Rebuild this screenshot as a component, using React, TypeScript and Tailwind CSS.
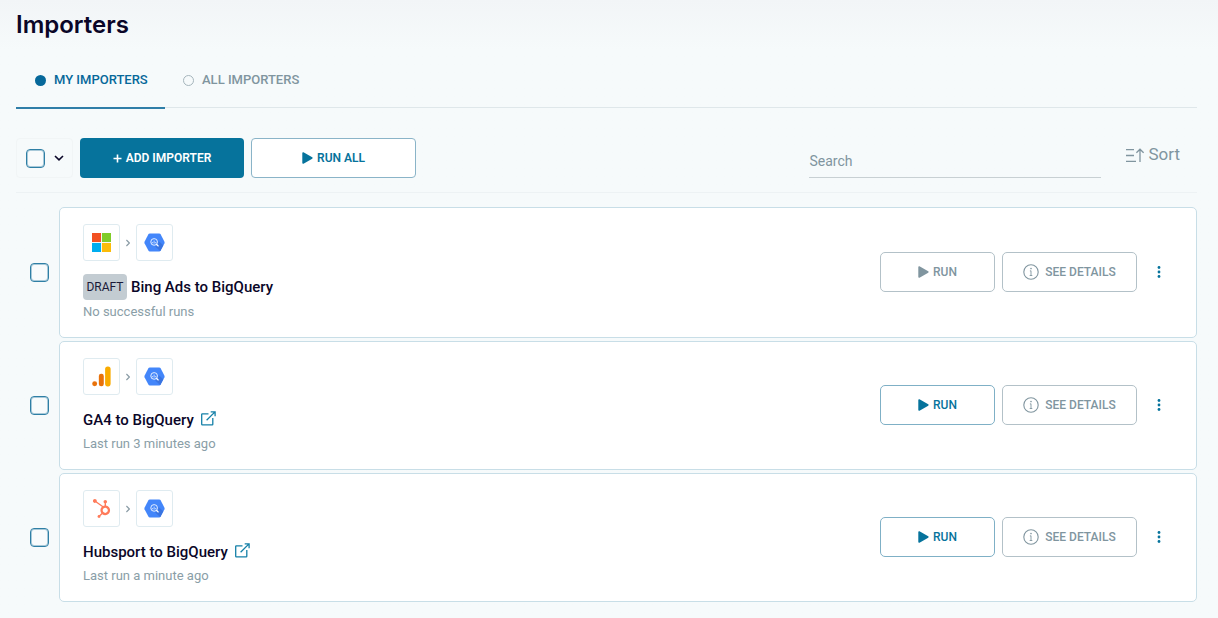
import type { ReactNode } from 'react';
import { FaHubspot } from 'react-icons/fa';

type Importer = {
  id: string;
  source: 'microsoft' | 'analytics' | 'hubspot';
  title: string;
  status: string;
  draft?: boolean;
};

const importers: Importer[] = [
  { id: 'bing', source: 'microsoft', title: 'Bing Ads to BigQuery', status: 'No successful runs', draft: true },
  { id: 'ga4', source: 'analytics', title: 'GA4 to BigQuery', status: 'Last run 3 minutes ago' },
  { id: 'hubspot', source: 'hubspot', title: 'Hubsport to BigQuery', status: 'Last run a minute ago' },
];

function MicrosoftLogo() {
  return (
    <svg width="19" height="19" viewBox="0 0 21 21" aria-hidden="true">
      <path fill="#f25022" d="M0 0h10v10H0z" />
      <path fill="#80cc28" d="M11 0h10v10H11z" />
      <path fill="#00adef" d="M0 11h10v10H0z" />
      <path fill="#fbbc09" d="M11 11h10v10H11z" />
    </svg>
  );
}

function AnalyticsLogo() {
  return (
    <svg width="19" height="21" viewBox="0 0 20 22" aria-hidden="true">
      <circle cx="2.8" cy="18.7" r="2.6" fill="#e8710a" />
      <rect x="7.2" y="8" width="5.2" height="13.3" rx="2.4" fill="#e8710a" />
      <rect x="13.8" y="0.4" width="5.8" height="21" rx="2.7" fill="#f9ab00" />
    </svg>
  );
}

function BigQueryLogo() {
  return (
    <svg width="21" height="19" viewBox="0 0 22 20" aria-hidden="true">
      <path fill="#4386fa" d="M6 .4h10c.6 0 1 .2 1.3.7l4.200 8.100c.2.5.2 1 0 1.500l-4.200 8.100c-.3.5-.7.8-1.300.8H6c-.6 0-1-.3-1.300-.8L.5 10.700c-.2-.5-.2-1 0-1.500L4.700 1.100C5 .6 5.400.4 6 .4z" />
      <path fill="#3a74e0" d="M14.500 13.800l-3 .2 5.400 5c.2-.1.3-.2.4-.4l3-5.600-5-4.600z" />
      <circle cx="10.6" cy="9.4" r="3.5" fill="#4386fa" stroke="#fff" strokeWidth="0.9" />
      <path d="M9 9.500v1.300M10.600 8v3.200M12.200 9.500v1.300" stroke="#fff" strokeWidth="0.7" />
      <path d="M13.300 12.100l1.600 1.600" stroke="#fff" strokeWidth="1.2" strokeLinecap="round" />
    </svg>
  );
}

function PlayIcon() {
  return (
    <svg width="11" height="12" viewBox="0 0 11 12" fill="currentColor" aria-hidden="true">
      <path d="M.3 1C.3.300.9 0 1.500.300l8.700 5c.6.300.6 1.100 0 1.400l-8.700 5c-.6.300-1.200 0-1.200-.7z" />
    </svg>
  );
}

function InfoIcon() {
  return (
    <svg width="16" height="16" viewBox="0 0 16 16" fill="none" stroke="currentColor" aria-hidden="true">
      <circle cx="8" cy="8" r="7.2" strokeWidth="1.1" />
      <path d="M8 6.700v5M6.900 6.900H8M6.700 11.500h2.600" strokeWidth="0.9" />
      <circle cx="8" cy="4.600" r="0.8" fill="currentColor" stroke="none" />
    </svg>
  );
}

function ExternalIcon() {
  return (
    <svg width="15" height="15" viewBox="0 0 15 15" fill="none" stroke="currentColor" strokeWidth="1.3" aria-hidden="true">
      <path d="M7.500 2.800H1.300c-.4 0-.6.2-.6.6v9.900c0 .4.2.6.6.6h9.900c.4 0 .6-.2.6-.6V7" />
      <path d="M5.600 9.200L14 .9M9.700.8h4.400v4.400" />
    </svg>
  );
}

function SortIcon() {
  return (
    <svg width="19" height="15" viewBox="0 0 19 15" fill="none" stroke="currentColor" strokeWidth="1.3" aria-hidden="true">
      <path d="M1 1.700h8M1 7.500h8M1 13.300h10M15 14V1.200M11.400 4.800L15 1.200l3.600 3.600" />
    </svg>
  );
}

function Tile({ children }: { children: ReactNode }) {
  return (
    <div className="flex h-[37px] w-[37px] items-center justify-center rounded-[3px] border border-[#dfebf0] bg-white">
      {children}
    </div>
  );
}

function Checkbox({ label }: { label: string }) {
  return (
    <input
      type="checkbox"
      aria-label={label}
      className="h-[19px] w-[19px] shrink-0 appearance-none rounded-[4px] border border-[#2f7fa5] bg-[#f8fbfc] ring-1 ring-[#2f7fa5]/40 ring-inset checked:bg-[#06739c]"
    />
  );
}

function ImporterRow({ importer }: { importer: Importer }) {
  return (
    <li className="flex items-center gap-2.5 pl-3.5">
      <Checkbox label={`Select ${importer.title}`} />
      <article className="flex min-w-0 grow items-center justify-between rounded-[5px] border border-[#c8dee7] bg-white pt-4 pr-[25px] pb-[13px] pl-[23px]">
        <div>
          <div className="flex items-center">
            <Tile>
              {importer.source === 'microsoft' && <MicrosoftLogo />}
              {importer.source === 'analytics' && <AnalyticsLogo />}
              {importer.source === 'hubspot' && <FaHubspot size={19} color="#ff7a59" />}
            </Tile>
            <svg className="mx-1.5" width="4" height="8" viewBox="0 0 4 8" fill="none" stroke="#8a9ba5" strokeWidth="1.2" aria-hidden="true">
              <path d="M.4 1L3.400 4 .4 7" />
            </svg>
            <Tile>
              <BigQueryLogo />
            </Tile>
          </div>
          <div className="mt-[13px] flex items-center">
            {importer.draft && (
              <span className="mr-1 flex h-[26px] w-11 items-center justify-center rounded-[4px] bg-[#c3ccd2] text-xs text-[#1a1a38]">
                DRAFT
              </span>
            )}
            <h2 className="text-[15px] leading-6 font-medium text-[#0a0628]">{importer.title}</h2>
            {!importer.draft && (
              <a href="#" aria-label={`Open ${importer.title}`} className="mb-1 ml-[7px] text-[#1480a8]">
                <ExternalIcon />
              </a>
            )}
          </div>
          <p className="text-[13px] leading-6 text-[#8a9ea7]">{importer.status}</p>
        </div>
        <div className="flex items-center pb-1">
          <button
            disabled={importer.draft}
            className="flex h-10 w-[115px] items-center justify-center gap-1 rounded-[5px] border border-[#7fb0c6] bg-white text-xs font-medium text-[#06739c] disabled:border-[#b3c1c8] disabled:text-[#80959f]"
          >
            <PlayIcon />
            RUN
          </button>
          <button className="ml-[7px] flex h-10 w-[135px] items-center justify-center gap-1.5 rounded-[5px] border border-[#b3c1c8] bg-white text-xs font-medium text-[#80959f]">
            <InfoIcon />
            SEE DETAILS
          </button>
          <button aria-label="More actions" className="ml-2.5 flex h-10 w-6 items-center justify-center text-[#06739c]">
            <svg width="4" height="12" viewBox="0 0 4 12" fill="currentColor" aria-hidden="true">
              <circle cx="2" cy="1.5" r="1.4" />
              <circle cx="2" cy="6" r="1.4" />
              <circle cx="2" cy="10.5" r="1.4" />
            </svg>
          </button>
        </div>
      </article>
    </li>
  );
}

export default function App() {
  return (
    <main className="min-h-screen bg-[#f6fafb] bg-linear-to-b from-[#f2f5f7] to-[#f6fafb] to-[50px] pr-[21px] pb-4 pl-4 font-['Roboto',sans-serif]">
      <h1 className="pt-[9px] font-['Inter',sans-serif] text-2xl leading-8 font-semibold text-[#0a0628]">Importers</h1>

      <nav className="mt-3 flex border-b border-[#dfe7ea]">
        <button className="-mb-0.5 flex h-14 w-[149px] items-center gap-2 border-b-2 border-[#2f7ea8] pl-[19px] text-[13px] font-medium text-[#06689a]">
          <span className="h-[11px] w-[11px] rounded-full bg-[#06689a]" />
          MY IMPORTERS
        </button>
        <button className="flex h-[54px] items-center gap-2 pl-[18px] text-[13px] font-medium text-[#80959f]">
          <span className="h-[11px] w-[11px] rounded-full border border-[#a5b5bc]" />
          ALL IMPORTERS
        </button>
      </nav>

      <div className="mt-[30px] flex items-start border-b border-[#edf2f4] pb-3.5">
        <div className="flex h-10 w-[57px] items-center gap-2 rounded-[4px] border border-[#f1f5f6] pl-[9px]">
          <Checkbox label="Select all importers" />
          <button aria-label="Selection options" className="text-[#0a0628]">
            <svg width="12" height="8" viewBox="0 0 12 8" fill="none" stroke="currentColor" strokeWidth="1.6" aria-hidden="true">
              <path d="M2 2l4 3.800L10 2" />
            </svg>
          </button>
        </div>
        <button className="ml-[7px] flex h-10 w-[164px] items-center justify-center gap-1 rounded-[4px] bg-[#06739c] text-xs font-semibold text-white">
          <svg width="9" height="9" viewBox="0 0 9 9" stroke="currentColor" strokeWidth="1.6" aria-hidden="true">
            <path d="M4.500.5v8M.5 4.500h8" />
          </svg>
          ADD IMPORTER
        </button>
        <button className="ml-[7px] flex h-10 w-[165px] items-center justify-center gap-1 rounded-[4px] border border-[#8ab4c8] bg-white text-xs font-semibold text-[#06739c]">
          <PlayIcon />
          RUN ALL
        </button>
        <input
          type="search"
          aria-label="Search"
          placeholder="Search"
          className="ml-auto h-10 w-[292px] border-b border-[#c8d0d3] bg-transparent pt-1.5 text-sm text-[#5f7883] outline-none placeholder:text-[#80959f]"
        />
        <button className="mt-[3px] mr-[17px] ml-6 flex h-7 items-center gap-1 text-[17px] text-[#80959f]">
          <SortIcon />
          Sort
        </button>
      </div>

      <ul className="mt-3.5 flex flex-col gap-[3px]">
        {importers.map((importer) => (
          <ImporterRow key={importer.id} importer={importer} />
        ))}
      </ul>
    </main>
  );
}
